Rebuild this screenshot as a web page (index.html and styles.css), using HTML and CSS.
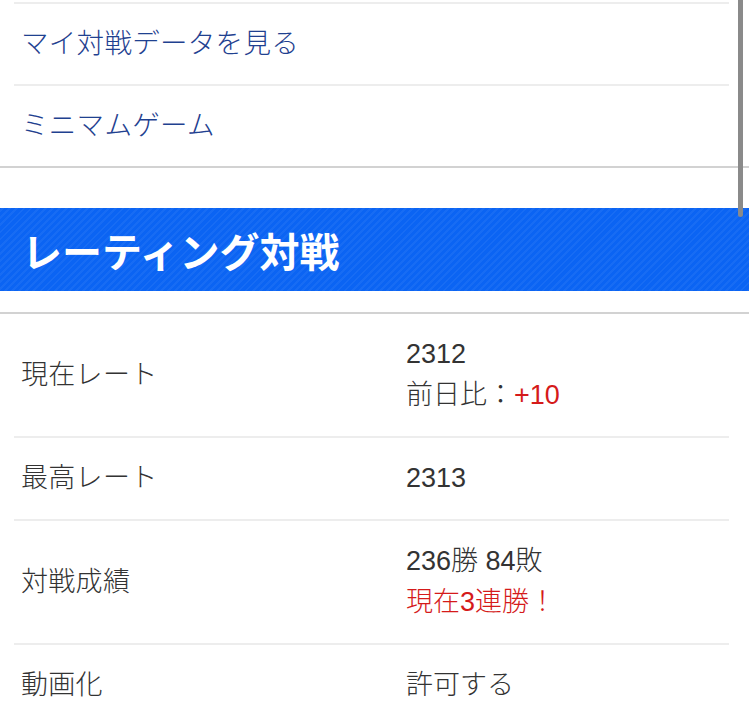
FILE: index.html
```html
<!DOCTYPE html>
<html lang="ja">
<head>
<meta charset="utf-8">
<title>レーティング対戦</title>
<link rel="stylesheet" href="styles.css">
</head>
<body>
<div class="page">
  <ul class="menu">
    <li class="menu-item"><a class="menu-link" href="#">マイ対戦データを見る</a></li>
    <li class="menu-item"><a class="menu-link" href="#">ミニマムゲーム</a></li>
  </ul>
  <h2 class="section-title">レーティング対戦</h2>
  <div class="stats">
    <div class="stat-row">
      <div class="stat-label">現在レート</div>
      <div class="stat-value">
        <div>2312</div>
        <div>前日比：<span class="up">+10</span></div>
      </div>
    </div>
    <div class="stat-row">
      <div class="stat-label">最高レート</div>
      <div class="stat-value"><div>2313</div></div>
    </div>
    <div class="stat-row">
      <div class="stat-label">対戦成績</div>
      <div class="stat-value">
        <div>236勝 84敗</div>
        <div class="streak">現在3連勝！</div>
      </div>
    </div>
    <div class="stat-row">
      <div class="stat-label">動画化</div>
      <div class="stat-value"><div>許可する</div></div>
    </div>
  </div>
  <div class="scrollbar"></div>
</div>
</body>
</html>
```

FILE: styles.css
```css
html, body {
  margin: 0;
  padding: 0;
  background: #ffffff;
}

body {
  font-family: "Liberation Sans", "Noto Sans CJK JP", sans-serif;
  color: #333333;
  font-size: 27px;
}

.page {
  position: relative;
  height: 724px;
  overflow: hidden;
}

.menu {
  list-style: none;
  margin: 0;
  padding: 2px 0 0;
  border-bottom: 2px solid #d2d2d2;
}

.menu-item {
  margin: 0 20px 0 14px;
  border-top: 2px solid #ededed;
  height: 80px;
  display: flex;
  align-items: center;
}

.menu-link {
  padding-left: 7px;
  color: #1f4190;
  text-decoration: none;
  font-size: 27.5px;
  font-weight: 300;
  letter-spacing: 0.3px;
  line-height: 1;
}

.section-title {
  margin: 40px 0 21px;
  height: 83px;
  box-sizing: border-box;
  padding-left: 22px;
  display: flex;
  align-items: center;
  background-color: #0b64f3;
  background-image: repeating-linear-gradient(-45deg, rgba(255,255,255,0.05) 0 2px, rgba(0,0,0,0) 2px 5px);
  color: #ffffff;
  font-size: 40px;
  font-weight: 700;
  letter-spacing: 0;
}

.stats {
  border-top: 2px solid #d2d2d2;
}

.stat-row {
  margin: 0 20px 0 14px;
  display: flex;
  align-items: center;
  padding: 20px 0;
  line-height: 41px;
  border-bottom: 2px solid #ededed;
}

.stat-label {
  width: 392px;
  padding-left: 7px;
  box-sizing: border-box;
  font-weight: 300;
  letter-spacing: 0.3px;
}

.stat-value {
  flex: 1;
  font-weight: 300;
}

.up {
  color: #d51a1a;
  font-weight: 400;
}

.streak {
  color: #d51a1a;
}

.scrollbar {
  position: absolute;
  top: 0;
  left: 738px;
  width: 5px;
  height: 217px;
  background: #8a8a8a;
  border-radius: 0 0 3px 3px;
}
```
